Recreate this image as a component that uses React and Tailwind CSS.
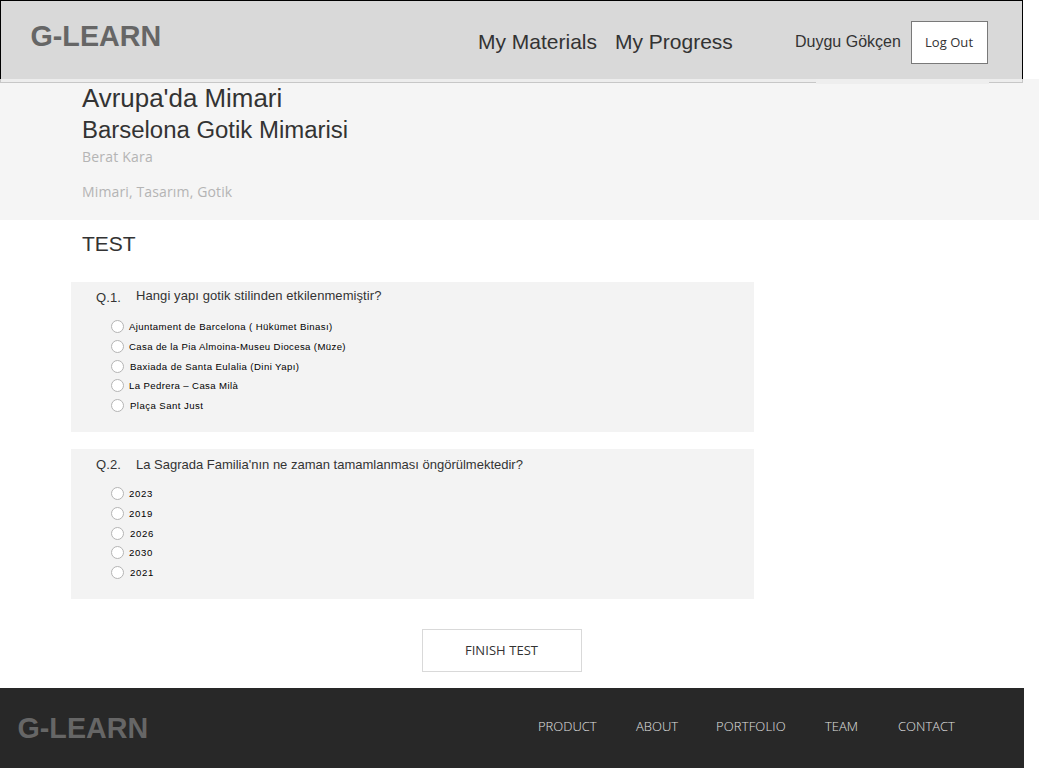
const questions = [
  {
    id: "Q.1.",
    text: "Hangi yapı gotik stilinden etkilenmemiştir?",
    textClass: "pt-1 tracking-[0.08px]",
    options: [
      { label: "Ajuntament de Barcelona ( Hükümet Binası)", row: "h-5", text: "ml-[5px] tracking-[0.4px]" },
      { label: "Casa de la Pia Almoina-Museu Diocesa (Müze)", row: "h-5", text: "ml-[5px] tracking-[0.37px]" },
      { label: "Baxiada de Santa Eulalia (Dini Yapı)", row: "h-[19px]", text: "ml-[6px] tracking-[0.42px]" },
      { label: "La Pedrera – Casa Milà", row: "h-5", text: "ml-[5px] tracking-[0.38px]" },
      { label: "Plaça Sant Just", row: "h-5", text: "ml-[6px] tracking-[0.44px]" },
    ],
  },
  {
    id: "Q.2.",
    text: "La Sagrada Familia'nın ne zaman tamamlanması öngörülmektedir?",
    textClass: "pt-[6px]",
    options: [
      { label: "2023", row: "h-5", text: "ml-[5px] tracking-[0.7px]" },
      { label: "2019", row: "h-5", text: "ml-[5px] tracking-[0.7px]" },
      { label: "2026", row: "h-[19px]", text: "ml-[6px] tracking-[0.7px]" },
      { label: "2030", row: "h-5", text: "ml-[5px] tracking-[0.7px]" },
      { label: "2021", row: "h-5", text: "ml-[6px] tracking-[0.7px]" },
    ],
  },
];

const footerLinks = [
  { label: "PRODUCT", width: "w-[98px]" },
  { label: "ABOUT", width: "w-20" },
  { label: "PORTFOLIO", width: "w-[109px] tracking-[0.15px]" },
  { label: "TEAM", width: "w-[73px]" },
  { label: "CONTACT", width: "w-[70px]" },
];

function Header() {
  return (
    <header className="flex h-[79px] w-[1023px] items-start border-x border-t border-black bg-[#d9d9d9] text-[#333333]">
      <div className="mt-[18px] ml-[29.5px] w-[447.5px] text-[28.7px] leading-[34px] font-bold text-[#666666]">G-LEARN</div>
      <nav className="mt-7 flex text-[21px] leading-[26px]">
        <a className="w-[137px] whitespace-nowrap">My Materials</a>
        <a className="w-[180px] whitespace-nowrap">My Progress</a>
      </nav>
      <span className="mt-[30px] w-[116px] text-base leading-[22px] whitespace-nowrap">Duygu Gökçen</span>
      <button className="mt-5 h-[43px] w-[77px] border border-[#797979] bg-white pr-px font-['Open_Sans',sans-serif] text-[13px] leading-[41px] tracking-[0.06px]">
        Log Out
      </button>
    </header>
  );
}

function CourseBanner() {
  return (
    <section className="h-[141px] bg-[#f5f5f5]">
      <div className="flex h-1 w-[1023px] bg-[#ededed]">
        <div className="h-1 w-[816px] border-b border-l border-[#c7c7c7]" />
        <div className="h-[5px] w-[173px] bg-[#eeeeee]" />
        <div className="h-1 w-[34px] border-r border-b border-[#c7c7c7]" />
      </div>
      <div className="pl-[82px] text-[#333333]">
        <h1 className="text-[25.9px] leading-[30px]">Avrupa'da Mimari</h1>
        <h2 className="mt-[3px] text-[23.95px] leading-7">Barselona Gotik Mimarisi</h2>
        <div className="font-['Open_Sans',sans-serif] text-sm leading-5 text-[#b4b4b4]">
          <p className="mt-[3px] tracking-[0.2px]">Berat Kara</p>
          <p className="mt-[15px] tracking-[0.14px]">Mimari, Tasarım, Gotik</p>
        </div>
      </div>
    </section>
  );
}

function Question({ question }) {
  return (
    <section className="h-[150px] w-[683px] bg-[#f3f3f3] pl-[25px]">
      <div className="flex h-[22px] text-[13px] leading-5 text-[#333333]">
        <span className="w-10 pt-[6px] tracking-[0.12px]">{question.id}</span>
        <p className={`whitespace-nowrap ${question.textClass}`}>{question.text}</p>
      </div>
      <div className="mt-[13px] pl-[15px]">
        {question.options.map((option) => (
          <label key={option.label} className={`flex items-start ${option.row}`}>
            <input
              type="radio"
              name={question.id}
              className="mt-[3px] h-[13px] w-[13px] appearance-none rounded-full border border-[#b4b4b4] bg-white"
            />
            <span className={`mt-1 text-[9.6px] leading-3 whitespace-nowrap text-black ${option.text}`}>
              {option.label}
            </span>
          </label>
        ))}
      </div>
    </section>
  );
}

function Footer() {
  return (
    <footer className="flex h-20 w-[1024px] items-start bg-[#282828]">
      <div className="mt-[23px] ml-[17.5px] w-[520.5px] text-[28.7px] leading-[34px] font-bold text-[#666666]">G-LEARN</div>
      <nav className="mt-7 flex font-['Open_Sans',sans-serif] text-[13px] leading-5 font-light text-[#e0e0e0]">
        {footerLinks.map((link) => (
          <a key={link.label} className={link.width}>{link.label}</a>
        ))}
      </nav>
    </footer>
  );
}

export default function App() {
  return (
    <div className="h-[768px] w-[1039px] overflow-hidden bg-white font-['Liberation_Sans',Arial,sans-serif]">
      <Header />
      <CourseBanner />
      <main className="h-[468px] pt-3 pl-[71px]">
        <h2 className="pl-[11px] text-[21px] leading-6 text-[#333333]">TEST</h2>
        <div className="mt-[26px] flex flex-col gap-[17px]">
          {questions.map((question) => (
            <Question key={question.id} question={question} />
          ))}
        </div>
        <button className="mt-[30px] ml-[351px] block h-[43px] w-40 border border-[#d9d9d9] bg-white pr-px font-['Open_Sans',sans-serif] text-[13px] leading-[41px] tracking-[0.06px] text-[#333333]">
          FINISH TEST
        </button>
      </main>
      <Footer />
    </div>
  );
}
